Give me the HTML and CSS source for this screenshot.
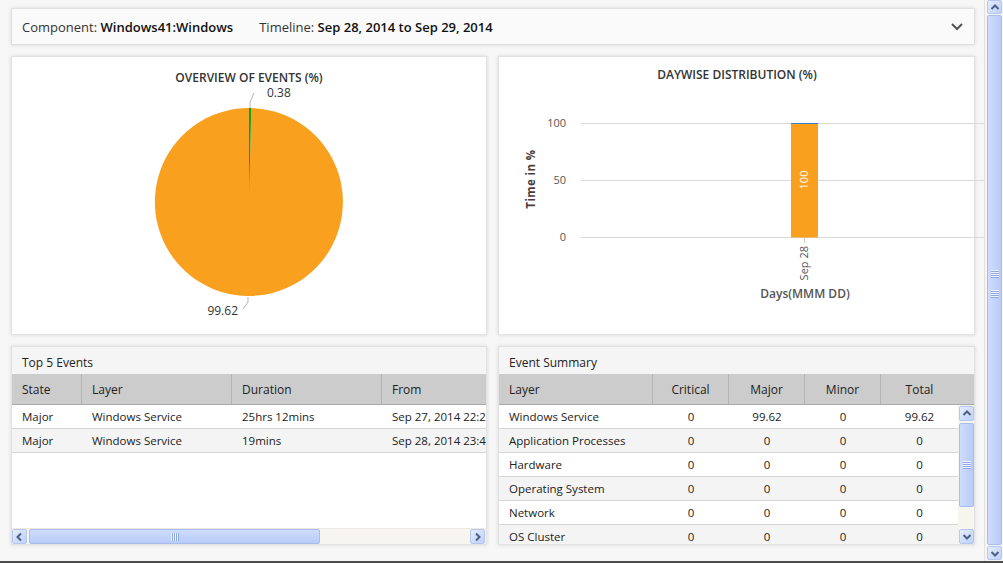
FILE: index.html
```html
<!DOCTYPE html>
<html>
<head>
<meta charset="utf-8">
<link rel="stylesheet" href="styles.css">
</head>
<body>
<div class="screen">
  <div class="main">
    <div class="topbar">
      <div class="filters">
        <span class="filter">Component: <b>Windows41:Windows</b></span>
        <span class="filter">Timeline: <b>Sep 28, 2014 to Sep 29, 2014</b></span>
      </div>
      <svg class="chev" width="12" height="8" viewBox="0 0 12 8"><polyline points="1,1 6,6 11,1" fill="none" stroke="#555" stroke-width="2"/></svg>
    </div>

    <div class="grid">
      <section class="panel chart-panel">
        <svg class="chart" width="474" height="277" viewBox="0 0 474 277">
          <text class="ctitle" x="237" y="25" text-anchor="middle">OVERVIEW OF EVENTS (%)</text>
          <path d="M237,145 L239.25,51.03 A94,94 0 1 1 237,51 Z" fill="#f9a01e"/>
          <path d="M237,145 L237,51 A94,94 0 0 1 239.25,51.03 Z" fill="#14a014"/>
          <polyline points="238,51 238,45 242,36" fill="none" stroke="#b5b5b5" stroke-width="1"/>
          <text class="plabel" x="255" y="40">0.38</text>
          <polyline points="236,240 236,245 231,252" fill="none" stroke="#b5b5b5" stroke-width="1"/>
          <text class="plabel" x="226" y="258" text-anchor="end">99.62</text>
        </svg>
      </section>

      <section class="panel chart-panel">
        <svg class="chart" width="474" height="277" viewBox="0 0 474 277">
          <text class="ctitle" x="238" y="22" text-anchor="middle">DAYWISE DISTRIBUTION (%)</text>
          <line x1="82" y1="66.5" x2="486" y2="66.5" stroke="#d9d9d9"/>
          <line x1="82" y1="123.5" x2="486" y2="123.5" stroke="#d9d9d9"/>
          <line x1="82" y1="180.5" x2="486" y2="180.5" stroke="#d9d9d9"/>
          <text class="ylab" x="67" y="70" text-anchor="end">100</text>
          <text class="ylab" x="67" y="127" text-anchor="end">50</text>
          <text class="ylab" x="67" y="184" text-anchor="end">0</text>
          <rect x="292" y="66" width="27" height="114.5" fill="#f9a01e"/>
          <line x1="292" y1="66.5" x2="319" y2="66.5" stroke="#3b7fc4" stroke-width="1"/>
          <text class="barlab" transform="translate(309,123) rotate(-90)" text-anchor="middle">100</text>
          <line x1="305.5" y1="181" x2="305.5" y2="186" stroke="#cfcfcf"/>
          <text class="xlab" transform="translate(309,189) rotate(-90)" text-anchor="end">Sep 28</text>
          <text class="xtitle" x="306" y="241" text-anchor="middle">Days(MMM DD)</text>
          <text class="ytitle" transform="translate(36,122) rotate(-90)" text-anchor="middle">Time in %</text>
        </svg>
      </section>

      <section class="panel table-panel">
        <div class="ptitle">Top 5 Events</div>
        <div class="t5-wrap">
          <div class="t5-row t5-head">
            <div class="th c-state">State</div>
            <div class="th c-wide">Layer</div>
            <div class="th c-wide">Duration</div>
            <div class="th c-wide">From</div>
          </div>
          <div class="t5-row t5-data">
            <div class="td c-state">Major</div>
            <div class="td c-wide">Windows Service</div>
            <div class="td c-wide">25hrs 12mins</div>
            <div class="td c-wide">Sep 27, 2014 22:25</div>
          </div>
          <div class="t5-row t5-data alt">
            <div class="td c-state">Major</div>
            <div class="td c-wide">Windows Service</div>
            <div class="td c-wide">19mins</div>
            <div class="td c-wide">Sep 28, 2014 23:41</div>
          </div>
        </div>
        <div class="hscroll">
          <div class="sb-btn"><svg width="9" height="10" viewBox="0 0 9 10"><polyline points="6,1.5 2.5,5 6,8.5" fill="none" stroke="#4d6185" stroke-width="2"/></svg></div>
          <div class="sb-thumb h-thumb"><span class="grip-v"></span></div>
          <div class="sb-track"></div>
          <div class="sb-btn"><svg width="9" height="10" viewBox="0 0 9 10"><polyline points="3,1.5 6.5,5 3,8.5" fill="none" stroke="#4d6185" stroke-width="2"/></svg></div>
        </div>
      </section>

      <section class="panel table-panel">
        <div class="ptitle">Event Summary</div>
        <div class="es-head">
          <div class="th e-layer">Layer</div>
          <div class="th e-num">Critical</div>
          <div class="th e-num">Major</div>
          <div class="th e-num">Minor</div>
          <div class="th e-num e-total">Total</div>
          <div class="e-fill"></div>
        </div>
        <div class="es-body">
          <div class="es-rows">
            <div class="es-row"><div class="td e-layer">Windows Service</div><div class="td e-num">0</div><div class="td e-num">99.62</div><div class="td e-num">0</div><div class="td e-num e-total">99.62</div></div>
            <div class="es-row alt"><div class="td e-layer">Application Processes</div><div class="td e-num">0</div><div class="td e-num">0</div><div class="td e-num">0</div><div class="td e-num e-total">0</div></div>
            <div class="es-row"><div class="td e-layer">Hardware</div><div class="td e-num">0</div><div class="td e-num">0</div><div class="td e-num">0</div><div class="td e-num e-total">0</div></div>
            <div class="es-row alt"><div class="td e-layer">Operating System</div><div class="td e-num">0</div><div class="td e-num">0</div><div class="td e-num">0</div><div class="td e-num e-total">0</div></div>
            <div class="es-row"><div class="td e-layer">Network</div><div class="td e-num">0</div><div class="td e-num">0</div><div class="td e-num">0</div><div class="td e-num e-total">0</div></div>
            <div class="es-row alt"><div class="td e-layer">OS Cluster</div><div class="td e-num">0</div><div class="td e-num">0</div><div class="td e-num">0</div><div class="td e-num e-total">0</div></div>
          </div>
          <div class="vscroll">
            <div class="sb-btn"><svg width="10" height="9" viewBox="0 0 10 9"><polyline points="1.5,6 5,2.5 8.5,6" fill="none" stroke="#4d6185" stroke-width="2"/></svg></div>
            <div class="sb-thumb v-thumb"><span class="grip-h"></span></div>
            <div class="sb-track"></div>
            <div class="sb-btn"><svg width="10" height="9" viewBox="0 0 10 9"><polyline points="1.5,3 5,6.5 8.5,3" fill="none" stroke="#4d6185" stroke-width="2"/></svg></div>
          </div>
        </div>
      </section>
    </div>
  </div>

  <div class="page-scroll">
    <div class="sb-btn pbtn"><svg width="10" height="9" viewBox="0 0 10 9"><polyline points="1.5,6 5,2.5 8.5,6" fill="none" stroke="#4d6185" stroke-width="2"/></svg></div>
    <div class="sb-thumb p-thumb"><span class="grip-h"></span><span class="grip-h"></span></div>
    <div class="sb-btn pbtn"><svg width="10" height="9" viewBox="0 0 10 9"><polyline points="1.5,3 5,6.5 8.5,3" fill="none" stroke="#4d6185" stroke-width="2"/></svg></div>
  </div>
</div>
<div class="bottomline"></div>
</body>
</html>
```

FILE: styles.css
```css
html, body {
  margin: 0;
  padding: 0;
}
body {
  width: 1003px;
  height: 563px;
  overflow: hidden;
  background: #f7f7f7;
  font-family: "Open Sans", "DejaVu Sans", sans-serif;
  color: #222;
}
.screen {
  display: flex;
  height: 561px;
}
.bottomline {
  height: 2px;
  background: #4b4b4b;
}
.main {
  width: 985px;
  flex: none;
  box-sizing: border-box;
  padding: 8px 0 0 11px;
  border-left: 1px solid #e4e4e4;
  margin-left: -1px;
}

/* top filter bar */
.topbar {
  width: 964px;
  height: 37px;
  box-sizing: border-box;
  border: 1px solid #e0e0e0;
  background: #fafafa;
  box-shadow: 0 0 4px rgba(0, 0, 0, 0.12);
  display: flex;
  align-items: center;
  justify-content: space-between;
  padding: 0 11px 0 10px;
  margin-bottom: 11px;
}
.filters {
  display: flex;
  gap: 26px;
  font-size: 13px;
  color: #333;
}
.filter b {
  font-weight: 600;
  color: #111;
}
.chev {
  display: block;
}

/* grid of panels */
.grid {
  display: grid;
  grid-template-columns: 476px 477px;
  grid-template-rows: 279px 199px;
  gap: 11px;
}
.panel {
  background: #fff;
  border: 1px solid #e2e2e2;
  box-sizing: border-box;
  box-shadow: 0 0 4px rgba(0, 0, 0, 0.13);
}
.chart {
  display: block;
  overflow: visible;
  font-family: "Open Sans", "DejaVu Sans", sans-serif;
}
.ctitle {
  font-size: 12px;
  font-weight: 600;
  fill: #333;
}
.plabel {
  font-size: 12px;
  fill: #333;
}
.ylab {
  font-size: 11px;
  fill: #555;
}
.barlab {
  font-size: 11px;
  fill: #fff;
}
.xlab {
  font-size: 11px;
  fill: #555;
}
.xtitle {
  font-size: 12px;
  font-weight: 600;
  fill: #555;
}
.ytitle {
  font-size: 11.5px;
  font-weight: 700;
  fill: #4c3c3c;
  letter-spacing: 0.4px;
}

/* tables */
.table-panel {
  display: flex;
  flex-direction: column;
  overflow: hidden;
}
.ptitle {
  flex: none;
  height: 27px;
  box-sizing: border-box;
  padding: 3px 0 0 10px;
  background: #f5f5f5;
  font-size: 12px;
  display: flex;
  align-items: center;
  color: #222;
}
.th {
  box-sizing: border-box;
  height: 30px;
  border-right: 1px solid #b3b3b3;
  display: flex;
  align-items: center;
  font-size: 12px;
  color: #222;
  flex: none;
}
.td {
  box-sizing: border-box;
  display: flex;
  align-items: center;
  font-size: 11.5px;
  color: #222;
  white-space: nowrap;
  overflow: hidden;
  flex: none;
}

.t5-wrap {
  flex: 1;
  overflow: hidden;
}
.t5-row {
  display: flex;
  width: 520px;
}
.t5-head {
  height: 31px;
  background: #cccccc;
  border-bottom: 1px solid #a9a9a9;
  box-sizing: border-box;
}
.t5-data {
  height: 24px;
  border-bottom: 1px solid #d6d6d6;
  box-sizing: border-box;
}
.t5-data .td {
  height: 23px;
}
.alt {
  background: #f4f4f4;
}
.c-state {
  width: 70px;
  padding-left: 10px;
}
.c-wide {
  width: 150px;
  padding-left: 10px;
}

.es-head {
  flex: none;
  display: flex;
  height: 31px;
  background: #cccccc;
  border-bottom: 1px solid #a9a9a9;
  box-sizing: border-box;
}
.e-layer {
  width: 154px;
  padding-left: 10px;
}
.e-num {
  width: 76px;
  justify-content: center;
}
.e-total {
  width: 77px;
  border-right: 0;
}
.e-fill {
  width: 16px;
}
.es-body {
  flex: 1;
  display: flex;
  overflow: hidden;
}
.es-rows {
  width: 459px;
  flex: none;
}
.es-row {
  display: flex;
  height: 24px;
  border-bottom: 1px solid #d6d6d6;
  box-sizing: border-box;
}
.es-row .td {
  height: 23px;
}

/* scrollbars */
.sb-btn {
  flex: none;
  width: 15px;
  height: 15px;
  box-sizing: border-box;
  border: 1px solid #b5c7ef;
  border-radius: 2px;
  background: linear-gradient(135deg, #e6edfe, #bcd0f9);
  display: flex;
  align-items: center;
  justify-content: center;
}
.sb-btn svg {
  display: block;
}
.sb-thumb {
  box-sizing: border-box;
  border: 1px solid #a8bdee;
  border-radius: 2px;
  display: flex;
  align-items: center;
  justify-content: center;
}
.sb-track {
  flex: 1;
}
.hscroll {
  flex: none;
  height: 16px;
  display: flex;
  background: #f6f5ef;
  border-top: 1px solid #ebe9e0;
  box-sizing: border-box;
  padding-right: 1px;
}
.hscroll .sb-btn {
  height: 15px;
}
.h-thumb {
  width: 291px;
  height: 15px;
  margin-left: 2px;
  background: linear-gradient(to bottom, #cfdcfd, #b8ccf8);
}
.grip-v {
  width: 8px;
  height: 8px;
  background: repeating-linear-gradient(to right, #eef3fe 0 1px, #8ea9e6 1px 2px);
}
.grip-h {
  width: 8px;
  height: 8px;
  background: repeating-linear-gradient(to bottom, #eef3fe 0 1px, #8ea9e6 1px 2px);
}
.vscroll {
  width: 16px;
  flex: none;
  display: flex;
  flex-direction: column;
  background: #f6f5ef;
  padding: 1px 0 0 1px;
  box-sizing: border-box;
}
.v-thumb {
  width: 15px;
  height: 84px;
  margin-top: 2px;
  background: linear-gradient(to right, #cfdcfd, #b8ccf8);
}

.page-scroll {
  width: 18px;
  flex: none;
  box-sizing: border-box;
  border-left: 1px solid #e2e2e2;
  background: #f6f5ef;
  padding: 0 1px 0 2px;
  display: flex;
  flex-direction: column;
  gap: 1px;
}
.pbtn {
  height: 14px;
}
.p-thumb {
  flex: 1;
  width: 15px;
  flex-direction: column;
  gap: 12px;
  padding-top: 8px;
  background: linear-gradient(to right, #cfdcfd, #b8ccf8);
}
.page-scroll .pbtn:last-child {
  margin-bottom: 1px;
}
```
